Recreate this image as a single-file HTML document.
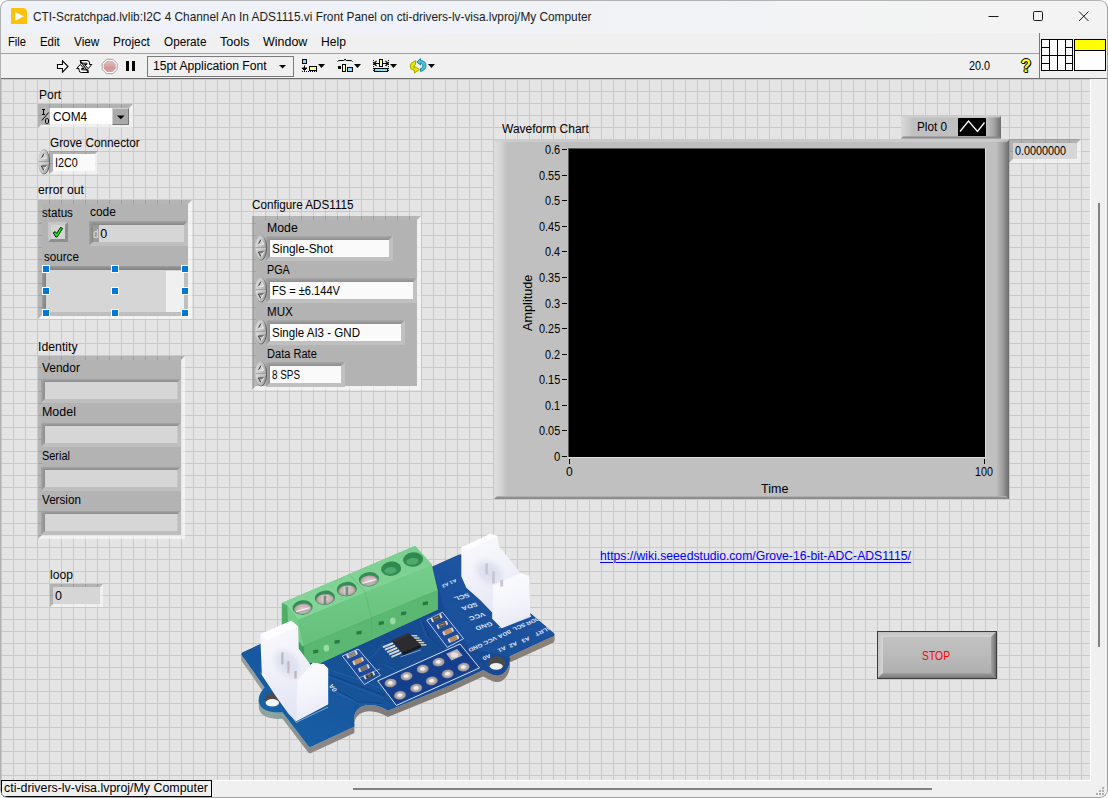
<!DOCTYPE html>
<html lang="en"><head><meta charset="utf-8"><title>CTI-Scratchpad.lvlib:I2C 4 Channel An In ADS1115.vi Front Panel</title>
<style>
html,body{margin:0;padding:0;background:#fff;}
body{width:1108px;height:798px;overflow:hidden;font-family:"Liberation Sans",sans-serif;}
#win{position:absolute;left:0;top:0;width:1108px;height:798px;overflow:hidden;background:#f0f0f0;border-radius:8px 8px 8px 8px;}
.b{position:absolute;box-sizing:border-box;}
.t{position:absolute;white-space:nowrap;color:#000;transform-origin:0 0;}
svg{position:absolute;overflow:visible;}
#panel{position:absolute;left:1px;top:79px;width:1089px;height:701px;background-color:#e4e4e4;
 background-image:linear-gradient(to right,#c9c9c9 1px,transparent 1px),linear-gradient(to bottom,#c9c9c9 1px,transparent 1px);
 background-size:12px 12px;background-position:0px 0px;}

</style></head><body>
<div id="win">
<div class="b" style="left:0;top:0;width:1108px;height:33px;background:linear-gradient(to right,#eef2f9 0%,#eff2f8 40%,#f3f3f3 85%);"></div>
<svg style="left:11px;top:8px" width="16" height="16" viewBox="0 0 16 16"><path d="M0 0H11.5Q16 0 16 4.5V16H0Z" fill="#ffc107"/><path d="M4.1 3.9L13 8.3L4.1 12.8Z" fill="#fff"/></svg>
<span class="t" style="left:33.30px;top:10px;font-size:12.2px;line-height:14px;transform:scaleX(0.9719);color:#1a1a1a;">CTI-Scratchpad.lvlib:I2C 4 Channel An In ADS1115.vi Front Panel on cti-drivers-lv-visa.lvproj/My Computer</span>
<svg style="left:980px;top:0" width="128" height="33" viewBox="0 0 128 33"><g fill="none" stroke="#1a1a1a" stroke-width="1"><path d="M8.5 16.5H18.5"/><rect x="53.5" y="11.5" width="9" height="9" rx="1.2"/><path d="M99 11.5L108.5 21M108.5 11.5L99 21"/></g></svg>
<div class="b" style="left:0;top:33px;width:1108px;height:20px;background:#f0f0f0;"></div>
<span class="t" style="left:8.40px;top:35px;font-size:12px;line-height:14px;transform:scaleX(0.9359);">File</span>
<span class="t" style="left:40.10px;top:35px;font-size:12px;line-height:14px;transform:scaleX(0.9524);">Edit</span>
<span class="t" style="left:73.60px;top:35px;font-size:12px;line-height:14px;transform:scaleX(0.9834);">View</span>
<span class="t" style="left:113.10px;top:35px;font-size:12px;line-height:14px;transform:scaleX(0.9878);">Project</span>
<span class="t" style="left:163.60px;top:35px;font-size:12px;line-height:14px;transform:scaleX(0.9780);">Operate</span>
<span class="t" style="left:219.60px;top:35px;font-size:12px;line-height:14px;transform:scaleX(1.0496);">Tools</span>
<span class="t" style="left:262.60px;top:35px;font-size:12px;line-height:14px;transform:scaleX(1.0394);">Window</span>
<span class="t" style="left:321.10px;top:35px;font-size:12px;line-height:14px;transform:scaleX(1.0084);">Help</span>
<div class="b" style="left:0;top:53px;width:1040px;height:1px;background:#a0a0a0;"></div>
<div class="b" style="left:0;top:54px;width:1108px;height:24px;background:#f0f0f0;"></div>
<div class="b" style="left:0;top:78px;width:1108px;height:1px;background:#6e6e6e;"></div>
<div class="b" style="left:1039px;top:33px;width:1px;height:45px;background:#7a7a7a;"></div>
<div id="panel"></div>
<div class="b" style="left:1090px;top:79px;width:1px;height:702px;background:#fff;"></div>
<div class="b" style="left:1px;top:780px;width:1090px;height:1px;background:#fff;"></div>
<div class="b" style="left:1091px;top:79px;width:17px;height:719px;background:#f0f0f0;"></div>
<div class="b" style="left:1px;top:781px;width:1107px;height:17px;background:#f0f0f0;"></div>
<div class="b" style="left:1098px;top:203px;width:2px;height:444px;background:#828282;"></div>
<div class="b" style="left:353px;top:788px;width:579px;height:2px;background:#828282;"></div>
<div class="b" style="left:1px;top:780px;width:211px;height:17px;background:#f0f0f0;border:1px solid #000;"></div>
<span class="t" style="left:4.10px;top:781px;font-size:12.5px;line-height:14px;transform:scaleX(0.9918);">cti-drivers-lv-visa.lvproj/My Computer</span>
<svg style="left:1094px;top:785px" width="12" height="12" viewBox="0 0 12 12"><g fill="#b0b0b0"><rect x="8" y="2" width="2" height="2"/><rect x="5" y="5" width="2" height="2"/><rect x="8" y="5" width="2" height="2"/><rect x="2" y="8" width="2" height="2"/><rect x="5" y="8" width="2" height="2"/><rect x="8" y="8" width="2" height="2"/></g></svg>
<svg style="left:0;top:0" width="1108" height="80" viewBox="0 0 1108 80"><path d="M57.5 64.5H62.5V60.8L68 66.5L62.5 72.2V68.5H57.5Z" fill="#fff" stroke="#000" stroke-width="1.1" stroke-linejoin="miter"/><g fill="#fff" stroke="#000" stroke-width="1" stroke-linejoin="miter"><path d="M80.5 60.5H87Q89.5 60.5 89.5 63V64.5H91.8L88.2 68.6L84.6 64.5H86.9V63.2H80.5Z"/><path d="M88 72.5H81.5Q79 72.5 79 70V68.5H76.7L80.3 64.4L83.9 68.5H81.6V69.8H88Z"/></g><path d="M80 60.2L88.6 72.8" stroke="#000" stroke-width="1.1" fill="none"/><defs><linearGradient id="ab" x1="0" y1="0" x2="0" y2="1"><stop offset="0" stop-color="#e3b5b5"/><stop offset="0.5" stop-color="#d9a4a4"/><stop offset="0.55" stop-color="#cf9797"/><stop offset="1" stop-color="#d7a3a3"/></linearGradient></defs><path d="M106.5 59.3H112.9L117.2 63.6V69.4L112.9 73.7H106.5L102.2 69.4V63.6Z" fill="#fafafa" stroke="#9a9a9a" stroke-width="0.9"/><path d="M107 60.9H112.4L115.7 64.2V68.8L112.4 72.1H107L103.7 68.8V64.2Z" fill="url(#ab)"/><rect x="126" y="61" width="3" height="10" fill="#000"/><rect x="132" y="61" width="3" height="10" fill="#000"/><rect x="147.5" y="56.5" width="146" height="20" fill="#f0f0f0" stroke="#7a7a7a" stroke-width="1"/><path d="M279 65H286L282.5 68.5Z" fill="#000"/><rect x="302.5" y="59.5" width="4" height="4" fill="#80e0ff" stroke="#000"/><path d="M304.5 65.5V70M302 68H307L304.5 70.5Z" fill="#000" stroke="#000" stroke-width="1"/><path d="M302 71.5H317" stroke="#000" stroke-width="1" stroke-dasharray="1 1" fill="none"/><rect x="309.5" y="66.5" width="7" height="4" fill="#ffff80" stroke="#000"/><path d="M318 64H325L321.5 68Z" fill="#000"/><path d="M337.5 61.5Q338 60.5 340 60.5H343.5Q344.5 60.5 345 59Q345.5 60.5 346.5 60.5H350Q352 60.5 352.5 61.5" stroke="#000" stroke-width="1" fill="none"/><rect x="338" y="66" width="3" height="3" fill="#000"/><rect x="342.5" y="64.5" width="3" height="7" fill="#ffff80" stroke="#000"/><rect x="347.5" y="67.5" width="5" height="4" fill="#80e0ff" stroke="#000"/><path d="M354 64H361L357.5 68Z" fill="#000"/><path d="M373.5 60V72M388.5 60V72" stroke="#000" stroke-width="1" stroke-dasharray="1 1" fill="none"/><path d="M374 63.5H388M376.5 61L374 63.5L376.5 66M385.5 61L388 63.5L385.5 66" stroke="#000" stroke-width="1.2" fill="none"/><rect x="379.5" y="59.5" width="3" height="7" fill="#ffff80" stroke="#000"/><rect x="374.5" y="68.5" width="13" height="3" fill="#80e0ff" stroke="#000"/><path d="M390 64H397L393.5 68Z" fill="#000"/><path d="M415.5 60.5L411 63.5Q409.5 66 411 69L414.5 70.5V73L419.5 69.5L414.5 66.5V68.2L413 66.5L415.5 64.5Z" fill="#e8e800" stroke="#a8a800" stroke-width="1" stroke-linejoin="round"/><path d="M420.5 58.5L416.8 62L420.5 65V63.2Q423 63.5 423 66T420.5 68.5V71.5Q426 70 426 65.5T420.5 60.5Z" fill="#55c0dd" stroke="#1f8aa8" stroke-width="1" stroke-linejoin="round"/><path d="M428 64H435L431.5 68Z" fill="#000"/><rect x="1041.5" y="39.5" width="31" height="31" fill="#fff" stroke="#000"/><path d="M1049.5 39.5V70.5M1057.5 39.5V70.5M1065.5 39.5V70.5M1041.5 47.5H1049.5M1041.5 55.5H1072.5M1041.5 63.5H1049.5M1065.5 47.5H1072.5M1065.5 63.5H1072.5" stroke="#000" fill="none"/><rect x="1074.5" y="39.5" width="31" height="31" fill="#fff" stroke="#000"/><rect x="1075" y="40" width="30" height="10" fill="#ffff00"/><path d="M1074.5 50.5H1105.5" stroke="#000"/></svg>
<span class="t" style="left:153.30px;top:59px;font-size:12.5px;line-height:14px;transform:scaleX(0.9739);">15pt Application Font</span>
<span class="t" style="left:968.90px;top:59px;font-size:12.5px;line-height:14px;transform:scaleX(0.8669);">20.0</span>
<span class="t" style="left:1021px;top:56px;font-size:17.5px;line-height:20px;transform:scaleX(0.94);font-weight:bold;color:#ffff00;text-shadow:1px 0 0 #000,-1px 0 0 #000,0 1px 0 #000,0 -1px 0 #000,1px 1px 0 #000;">?</span>
<span class="t" style="left:38.90px;top:88px;font-size:12.5px;line-height:14px;transform:scaleX(0.9635);">Port</span>
<div class="b" style="left:38px;top:104px;width:95px;height:24px;border-style:solid;border-width:4px;border-color:rgba(0,0,0,.22) rgba(255,255,255,.45) rgba(255,255,255,.45) rgba(0,0,0,.22);background:#fff;background-clip:padding-box;"></div>
<div class="b" style="left:42px;top:108px;width:8px;height:17px;background:#b6b6b6;"></div>
<svg style="left:41px;top:108px" width="9" height="17" viewBox="0 0 9 17"><path d="M1 1.5H4M2.5 1.5V6.5M1 6.5H4" stroke="#000" stroke-width="1" fill="none"/><path d="M7.6 4.5L0.8 12.5" stroke="#000" stroke-width="1" fill="none"/><rect x="4.5" y="10.5" width="3" height="5" rx="1.3" fill="none" stroke="#000" stroke-width="1"/></svg>
<span class="t" style="left:52.90px;top:110px;font-size:12.5px;line-height:14px;transform:scaleX(0.9440);">COM4</span>
<div class="b" style="left:112px;top:108px;width:17px;height:17px;border-style:solid;border-width:1.5px;border-color:#d0d0d0 #747474 #747474 #d0d0d0;background:#a9a9a9;"></div>
<svg style="left:112px;top:108px" width="17" height="17" viewBox="0 0 17 17"><path d="M5 7.5H12.6L8.8 11.3Z" fill="#000"/></svg>
<span class="t" style="left:50.20px;top:136px;font-size:12.5px;line-height:14px;transform:scaleX(0.9434);">Grove Connector</span>
<div class="b" style="left:49px;top:151px;width:49px;height:23px;border-style:solid;border-width:3px 3px 3px 4px;border-color:rgba(0,0,0,.22) rgba(255,255,255,.45) rgba(255,255,255,.45) rgba(0,0,0,.22);background:#fafafa;background-clip:padding-box;"></div>
<svg style="left:38px;top:149.2px" width="12" height="25.6" viewBox="0 0 12 25.6"><defs><linearGradient id="sp1" x1="0" y1="0" x2="1" y2="0.3"><stop offset="0" stop-color="#e0e0e0"/><stop offset="0.5" stop-color="#cacaca"/><stop offset="1" stop-color="#a8a8a8"/></linearGradient><linearGradient id="ss1" x1="0" y1="0" x2="1" y2="0.4"><stop offset="0" stop-color="#d8d8d8"/><stop offset="0.55" stop-color="#a0a0a0"/><stop offset="1" stop-color="#4c4c4c"/></linearGradient></defs><ellipse cx="6.0" cy="12.8" rx="5.5" ry="12.3" fill="url(#sp1)" stroke="url(#ss1)" stroke-width="0.9"/><path d="M0.8 12.8H11.2" stroke="#909090" stroke-width="1"/><path d="M1 13.8H11" stroke="#dedede" stroke-width="0.8"/><path d="M3.4 9.200000000000001L6.0 4.4" stroke="#303030" stroke-width="1" fill="none"/><path d="M6.0 4.4L8.6 9.200000000000001H3.4" stroke="#f0f0f0" stroke-width="1" fill="none"/><path d="M8.6 17.0H3.4L6.0 21.8" stroke="#303030" stroke-width="1" fill="none"/><path d="M6.0 21.8L8.6 17.0" stroke="#f0f0f0" stroke-width="1" fill="none"/></svg>
<span class="t" style="left:55.40px;top:156px;font-size:12.5px;line-height:14px;transform:scaleX(0.8636);">I2C0</span>
<span class="t" style="left:38.10px;top:183px;font-size:12.5px;line-height:14px;transform:scaleX(0.9715);">error out</span>
<div class="b" style="left:38px;top:200px;width:154px;height:119px;border-style:solid;border-width:4px;border-color:rgba(0,0,0,.2) rgba(255,255,255,.55) rgba(255,255,255,.55) rgba(0,0,0,.2);background:#b3b3b3;background-clip:padding-box;"></div>
<span class="t" style="left:42.10px;top:206px;font-size:12.5px;line-height:14px;transform:scaleX(0.9263);">status</span>
<span class="t" style="left:90.10px;top:205px;font-size:12.5px;line-height:14px;transform:scaleX(0.9556);">code</span>
<div class="b" style="left:48px;top:222px;width:20px;height:20px;border-style:solid;border-width:3px;border-color:#c6c6c6 #8e8e8e #8e8e8e #c6c6c6;background:#d4d4d4;"></div>
<svg style="left:48px;top:222px" width="20" height="20" viewBox="0 0 20 20"><path d="M5.3 10.8L7.2 9.6L8.6 11.4L12.6 5.4L14.6 6.4L9.2 15L7.8 15Z" fill="#00ff00" stroke="#000" stroke-width="0.9" stroke-linejoin="round"/></svg>
<svg style="left:89px;top:221px" width="99" height="25" viewBox="0 0 99 25"><defs><linearGradient id="g89_221t" x1="0" y1="0" x2="0" y2="1"><stop offset="0" stop-color="#a3a3a3"/><stop offset="1" stop-color="#858585"/></linearGradient><linearGradient id="g89_221l" x1="0" y1="0" x2="1" y2="0"><stop offset="0" stop-color="#a3a3a3"/><stop offset="1" stop-color="#858585"/></linearGradient></defs><path d="M0 0H99L95 4H4Z" fill="url(#g89_221t)"/><path d="M0 0L4 4V21L0 25Z" fill="url(#g89_221l)"/><path d="M99 0V25H0L4 21H95V4Z" fill="#bfbfbf"/><rect x="4" y="4" width="91" height="17" fill="#d6d6d6"/></svg>
<div class="b" style="left:93px;top:225px;width:6px;height:17px;background:#9b9b9b;"></div>
<span class="t" style="left:92.70px;top:227px;font-size:12.5px;line-height:14px;transform:scaleX(0.8200);color:#dcdcdc;">d</span>
<span class="t" style="left:100.30px;top:227px;font-size:12.5px;line-height:14px;">0</span>
<span class="t" style="left:44.10px;top:250px;font-size:12.5px;line-height:14px;transform:scaleX(0.9300);">source</span>
<svg style="left:42px;top:266px" width="146" height="50" viewBox="0 0 146 50"><defs><linearGradient id="g42_266t" x1="0" y1="0" x2="0" y2="1"><stop offset="0" stop-color="#9c9c9c"/><stop offset="1" stop-color="#808080"/></linearGradient><linearGradient id="g42_266l" x1="0" y1="0" x2="1" y2="0"><stop offset="0" stop-color="#9c9c9c"/><stop offset="1" stop-color="#808080"/></linearGradient></defs><path d="M0 0H146L142 4H4Z" fill="url(#g42_266t)"/><path d="M0 0L4 4V46L0 50Z" fill="url(#g42_266l)"/><path d="M146 0V50H0L4 46H142V4Z" fill="#bfbfbf"/><rect x="4" y="4" width="138" height="42" fill="#d6d6d6"/></svg>
<div class="b" style="left:166px;top:271px;width:17.5px;height:40.5px;background:#f0f0f0;"></div>
<div class="b" style="left:42px;top:265px;width:8px;height:8px;background:#0078d7;border:1px solid #fff;"></div>
<div class="b" style="left:42px;top:287px;width:8px;height:8px;background:#0078d7;border:1px solid #fff;"></div>
<div class="b" style="left:42px;top:309px;width:8px;height:8px;background:#0078d7;border:1px solid #fff;"></div>
<div class="b" style="left:111px;top:265px;width:8px;height:8px;background:#0078d7;border:1px solid #fff;"></div>
<div class="b" style="left:111px;top:287px;width:8px;height:8px;background:#0078d7;border:1px solid #fff;"></div>
<div class="b" style="left:111px;top:309px;width:8px;height:8px;background:#0078d7;border:1px solid #fff;"></div>
<div class="b" style="left:181px;top:265px;width:8px;height:8px;background:#0078d7;border:1px solid #fff;"></div>
<div class="b" style="left:181px;top:287px;width:8px;height:8px;background:#0078d7;border:1px solid #fff;"></div>
<div class="b" style="left:181px;top:309px;width:8px;height:8px;background:#0078d7;border:1px solid #fff;"></div>
<span class="t" style="left:38.40px;top:340px;font-size:12.5px;line-height:14px;transform:scaleX(0.9824);">Identity</span>
<div class="b" style="left:38px;top:355.5px;width:147px;height:183.5px;border-style:solid;border-width:4px;border-color:rgba(0,0,0,.2) rgba(255,255,255,.55) rgba(255,255,255,.55) rgba(0,0,0,.2);background:#b3b3b3;background-clip:padding-box;"></div>
<span class="t" style="left:42.10px;top:361px;font-size:12.5px;line-height:14px;transform:scaleX(0.9566);">Vendor</span>
<svg style="left:41px;top:379px" width="140" height="24" viewBox="0 0 140 24"><defs><linearGradient id="g41_379t" x1="0" y1="0" x2="0" y2="1"><stop offset="0" stop-color="#a6a6a6"/><stop offset="1" stop-color="#8c8c8c"/></linearGradient><linearGradient id="g41_379l" x1="0" y1="0" x2="1" y2="0"><stop offset="0" stop-color="#a6a6a6"/><stop offset="1" stop-color="#8c8c8c"/></linearGradient></defs><path d="M0 0H140L136.5 3H4Z" fill="url(#g41_379t)"/><path d="M0 0L4 3V20L0 24Z" fill="url(#g41_379l)"/><path d="M140 0V24H0L4 20H136.5V3Z" fill="#bebebe"/><rect x="4" y="3" width="132.5" height="17" fill="#d6d6d6"/></svg>
<span class="t" style="left:42.10px;top:405px;font-size:12.5px;line-height:14px;transform:scaleX(0.9956);">Model</span>
<svg style="left:41px;top:423px" width="140" height="24" viewBox="0 0 140 24"><defs><linearGradient id="g41_423t" x1="0" y1="0" x2="0" y2="1"><stop offset="0" stop-color="#a6a6a6"/><stop offset="1" stop-color="#8c8c8c"/></linearGradient><linearGradient id="g41_423l" x1="0" y1="0" x2="1" y2="0"><stop offset="0" stop-color="#a6a6a6"/><stop offset="1" stop-color="#8c8c8c"/></linearGradient></defs><path d="M0 0H140L136.5 3H4Z" fill="url(#g41_423t)"/><path d="M0 0L4 3V20L0 24Z" fill="url(#g41_423l)"/><path d="M140 0V24H0L4 20H136.5V3Z" fill="#bebebe"/><rect x="4" y="3" width="132.5" height="17" fill="#d6d6d6"/></svg>
<span class="t" style="left:42.10px;top:449px;font-size:12.5px;line-height:14px;transform:scaleX(0.8726);">Serial</span>
<svg style="left:41px;top:467px" width="140" height="24" viewBox="0 0 140 24"><defs><linearGradient id="g41_467t" x1="0" y1="0" x2="0" y2="1"><stop offset="0" stop-color="#a6a6a6"/><stop offset="1" stop-color="#8c8c8c"/></linearGradient><linearGradient id="g41_467l" x1="0" y1="0" x2="1" y2="0"><stop offset="0" stop-color="#a6a6a6"/><stop offset="1" stop-color="#8c8c8c"/></linearGradient></defs><path d="M0 0H140L136.5 3H4Z" fill="url(#g41_467t)"/><path d="M0 0L4 3V20L0 24Z" fill="url(#g41_467l)"/><path d="M140 0V24H0L4 20H136.5V3Z" fill="#bebebe"/><rect x="4" y="3" width="132.5" height="17" fill="#d6d6d6"/></svg>
<span class="t" style="left:42.10px;top:493px;font-size:12.5px;line-height:14px;transform:scaleX(0.9329);">Version</span>
<svg style="left:41px;top:511px" width="140" height="24" viewBox="0 0 140 24"><defs><linearGradient id="g41_511t" x1="0" y1="0" x2="0" y2="1"><stop offset="0" stop-color="#a6a6a6"/><stop offset="1" stop-color="#8c8c8c"/></linearGradient><linearGradient id="g41_511l" x1="0" y1="0" x2="1" y2="0"><stop offset="0" stop-color="#a6a6a6"/><stop offset="1" stop-color="#8c8c8c"/></linearGradient></defs><path d="M0 0H140L136.5 3H4Z" fill="url(#g41_511t)"/><path d="M0 0L4 3V20L0 24Z" fill="url(#g41_511l)"/><path d="M140 0V24H0L4 20H136.5V3Z" fill="#bebebe"/><rect x="4" y="3" width="132.5" height="17" fill="#d6d6d6"/></svg>
<span class="t" style="left:50.10px;top:568px;font-size:12.5px;line-height:14px;transform:scaleX(0.9685);">loop</span>
<div class="b" style="left:50px;top:584px;width:53px;height:23px;border-style:solid;border-width:3px 3.5px 3.5px 3px;border-color:rgba(0,0,0,.22) rgba(255,255,255,.45) rgba(255,255,255,.45) rgba(0,0,0,.22);background:#d6d6d6;background-clip:padding-box;"></div>
<span class="t" style="left:55.10px;top:589px;font-size:12.5px;line-height:14px;">0</span>
<span class="t" style="left:252.40px;top:198px;font-size:12.5px;line-height:14px;transform:scaleX(0.9352);">Configure ADS1115</span>
<div class="b" style="left:252px;top:216px;width:169px;height:174px;border-style:solid;border-width:4px;border-color:rgba(0,0,0,.2) rgba(255,255,255,.55) rgba(255,255,255,.55) rgba(0,0,0,.2);background:#b3b3b3;background-clip:padding-box;"></div>
<span class="t" style="left:267.20px;top:221px;font-size:12.5px;line-height:14px;transform:scaleX(0.9848);">Mode</span>
<svg style="left:266px;top:236px" width="127" height="25" viewBox="0 0 127 25"><defs><linearGradient id="g266_236t" x1="0" y1="0" x2="0" y2="1"><stop offset="0" stop-color="#a8a8a8"/><stop offset="1" stop-color="#8e8e8e"/></linearGradient><linearGradient id="g266_236l" x1="0" y1="0" x2="1" y2="0"><stop offset="0" stop-color="#a8a8a8"/><stop offset="1" stop-color="#8e8e8e"/></linearGradient></defs><path d="M0 0H127L123 4H4Z" fill="url(#g266_236t)"/><path d="M0 0L4 4V21L0 25Z" fill="url(#g266_236l)"/><path d="M127 0V25H0L4 21H123V4Z" fill="#c0c0c0"/><rect x="4" y="4" width="119" height="17" fill="#fafafa"/></svg>
<svg style="left:254.8px;top:235.3px" width="12" height="25.6" viewBox="0 0 12 25.6"><defs><linearGradient id="sp2" x1="0" y1="0" x2="1" y2="0.3"><stop offset="0" stop-color="#e0e0e0"/><stop offset="0.5" stop-color="#cacaca"/><stop offset="1" stop-color="#a8a8a8"/></linearGradient><linearGradient id="ss2" x1="0" y1="0" x2="1" y2="0.4"><stop offset="0" stop-color="#d8d8d8"/><stop offset="0.55" stop-color="#a0a0a0"/><stop offset="1" stop-color="#4c4c4c"/></linearGradient></defs><ellipse cx="6.0" cy="12.8" rx="5.5" ry="12.3" fill="url(#sp2)" stroke="url(#ss2)" stroke-width="0.9"/><path d="M0.8 12.8H11.2" stroke="#909090" stroke-width="1"/><path d="M1 13.8H11" stroke="#dedede" stroke-width="0.8"/><path d="M3.4 9.200000000000001L6.0 4.4" stroke="#303030" stroke-width="1" fill="none"/><path d="M6.0 4.4L8.6 9.200000000000001H3.4" stroke="#f0f0f0" stroke-width="1" fill="none"/><path d="M8.6 17.0H3.4L6.0 21.8" stroke="#303030" stroke-width="1" fill="none"/><path d="M6.0 21.8L8.6 17.0" stroke="#f0f0f0" stroke-width="1" fill="none"/></svg>
<span class="t" style="left:272.00px;top:242px;font-size:12.5px;line-height:14px;transform:scaleX(0.9439);">Single-Shot</span>
<span class="t" style="left:267.20px;top:263px;font-size:12.5px;line-height:14px;transform:scaleX(0.8634);">PGA</span>
<svg style="left:266px;top:278px" width="151" height="25" viewBox="0 0 151 25"><defs><linearGradient id="g266_278t" x1="0" y1="0" x2="0" y2="1"><stop offset="0" stop-color="#a8a8a8"/><stop offset="1" stop-color="#8e8e8e"/></linearGradient><linearGradient id="g266_278l" x1="0" y1="0" x2="1" y2="0"><stop offset="0" stop-color="#a8a8a8"/><stop offset="1" stop-color="#8e8e8e"/></linearGradient></defs><path d="M0 0H151L147 4H4Z" fill="url(#g266_278t)"/><path d="M0 0L4 4V21L0 25Z" fill="url(#g266_278l)"/><path d="M151 0V25H0L4 21H147V4Z" fill="#c0c0c0"/><rect x="4" y="4" width="143" height="17" fill="#fafafa"/></svg>
<svg style="left:254.8px;top:277.3px" width="12" height="25.6" viewBox="0 0 12 25.6"><defs><linearGradient id="sp3" x1="0" y1="0" x2="1" y2="0.3"><stop offset="0" stop-color="#e0e0e0"/><stop offset="0.5" stop-color="#cacaca"/><stop offset="1" stop-color="#a8a8a8"/></linearGradient><linearGradient id="ss3" x1="0" y1="0" x2="1" y2="0.4"><stop offset="0" stop-color="#d8d8d8"/><stop offset="0.55" stop-color="#a0a0a0"/><stop offset="1" stop-color="#4c4c4c"/></linearGradient></defs><ellipse cx="6.0" cy="12.8" rx="5.5" ry="12.3" fill="url(#sp3)" stroke="url(#ss3)" stroke-width="0.9"/><path d="M0.8 12.8H11.2" stroke="#909090" stroke-width="1"/><path d="M1 13.8H11" stroke="#dedede" stroke-width="0.8"/><path d="M3.4 9.200000000000001L6.0 4.4" stroke="#303030" stroke-width="1" fill="none"/><path d="M6.0 4.4L8.6 9.200000000000001H3.4" stroke="#f0f0f0" stroke-width="1" fill="none"/><path d="M8.6 17.0H3.4L6.0 21.8" stroke="#303030" stroke-width="1" fill="none"/><path d="M6.0 21.8L8.6 17.0" stroke="#f0f0f0" stroke-width="1" fill="none"/></svg>
<span class="t" style="left:272.00px;top:284px;font-size:12.5px;line-height:14px;transform:scaleX(0.8865);">FS = ±6.144V</span>
<span class="t" style="left:267.20px;top:305px;font-size:12.5px;line-height:14px;transform:scaleX(0.9288);">MUX</span>
<svg style="left:266px;top:320px" width="139" height="25" viewBox="0 0 139 25"><defs><linearGradient id="g266_320t" x1="0" y1="0" x2="0" y2="1"><stop offset="0" stop-color="#a8a8a8"/><stop offset="1" stop-color="#8e8e8e"/></linearGradient><linearGradient id="g266_320l" x1="0" y1="0" x2="1" y2="0"><stop offset="0" stop-color="#a8a8a8"/><stop offset="1" stop-color="#8e8e8e"/></linearGradient></defs><path d="M0 0H139L135 4H4Z" fill="url(#g266_320t)"/><path d="M0 0L4 4V21L0 25Z" fill="url(#g266_320l)"/><path d="M139 0V25H0L4 21H135V4Z" fill="#c0c0c0"/><rect x="4" y="4" width="131" height="17" fill="#fafafa"/></svg>
<svg style="left:254.8px;top:319.3px" width="12" height="25.6" viewBox="0 0 12 25.6"><defs><linearGradient id="sp4" x1="0" y1="0" x2="1" y2="0.3"><stop offset="0" stop-color="#e0e0e0"/><stop offset="0.5" stop-color="#cacaca"/><stop offset="1" stop-color="#a8a8a8"/></linearGradient><linearGradient id="ss4" x1="0" y1="0" x2="1" y2="0.4"><stop offset="0" stop-color="#d8d8d8"/><stop offset="0.55" stop-color="#a0a0a0"/><stop offset="1" stop-color="#4c4c4c"/></linearGradient></defs><ellipse cx="6.0" cy="12.8" rx="5.5" ry="12.3" fill="url(#sp4)" stroke="url(#ss4)" stroke-width="0.9"/><path d="M0.8 12.8H11.2" stroke="#909090" stroke-width="1"/><path d="M1 13.8H11" stroke="#dedede" stroke-width="0.8"/><path d="M3.4 9.200000000000001L6.0 4.4" stroke="#303030" stroke-width="1" fill="none"/><path d="M6.0 4.4L8.6 9.200000000000001H3.4" stroke="#f0f0f0" stroke-width="1" fill="none"/><path d="M8.6 17.0H3.4L6.0 21.8" stroke="#303030" stroke-width="1" fill="none"/><path d="M6.0 21.8L8.6 17.0" stroke="#f0f0f0" stroke-width="1" fill="none"/></svg>
<span class="t" style="left:272.00px;top:326px;font-size:12.5px;line-height:14px;transform:scaleX(0.9245);">Single AI3 - GND</span>
<span class="t" style="left:267.20px;top:347px;font-size:12.5px;line-height:14px;transform:scaleX(0.8849);">Data Rate</span>
<svg style="left:266px;top:362px" width="79" height="25" viewBox="0 0 79 25"><defs><linearGradient id="g266_362t" x1="0" y1="0" x2="0" y2="1"><stop offset="0" stop-color="#a8a8a8"/><stop offset="1" stop-color="#8e8e8e"/></linearGradient><linearGradient id="g266_362l" x1="0" y1="0" x2="1" y2="0"><stop offset="0" stop-color="#a8a8a8"/><stop offset="1" stop-color="#8e8e8e"/></linearGradient></defs><path d="M0 0H79L75 4H4Z" fill="url(#g266_362t)"/><path d="M0 0L4 4V21L0 25Z" fill="url(#g266_362l)"/><path d="M79 0V25H0L4 21H75V4Z" fill="#c0c0c0"/><rect x="4" y="4" width="71" height="17" fill="#fafafa"/></svg>
<svg style="left:254.8px;top:361.3px" width="12" height="25.6" viewBox="0 0 12 25.6"><defs><linearGradient id="sp5" x1="0" y1="0" x2="1" y2="0.3"><stop offset="0" stop-color="#e0e0e0"/><stop offset="0.5" stop-color="#cacaca"/><stop offset="1" stop-color="#a8a8a8"/></linearGradient><linearGradient id="ss5" x1="0" y1="0" x2="1" y2="0.4"><stop offset="0" stop-color="#d8d8d8"/><stop offset="0.55" stop-color="#a0a0a0"/><stop offset="1" stop-color="#4c4c4c"/></linearGradient></defs><ellipse cx="6.0" cy="12.8" rx="5.5" ry="12.3" fill="url(#sp5)" stroke="url(#ss5)" stroke-width="0.9"/><path d="M0.8 12.8H11.2" stroke="#909090" stroke-width="1"/><path d="M1 13.8H11" stroke="#dedede" stroke-width="0.8"/><path d="M3.4 9.200000000000001L6.0 4.4" stroke="#303030" stroke-width="1" fill="none"/><path d="M6.0 4.4L8.6 9.200000000000001H3.4" stroke="#f0f0f0" stroke-width="1" fill="none"/><path d="M8.6 17.0H3.4L6.0 21.8" stroke="#303030" stroke-width="1" fill="none"/><path d="M6.0 21.8L8.6 17.0" stroke="#f0f0f0" stroke-width="1" fill="none"/></svg>
<span class="t" style="left:272.00px;top:368px;font-size:12.5px;line-height:14px;transform:scaleX(0.7901);">8 SPS</span>
<span class="t" style="left:600.10px;top:549px;font-size:12.5px;line-height:14px;transform:scaleX(0.9742);color:#0000ff;text-decoration:underline;text-underline-offset:1.5px;text-decoration-thickness:1px;">https://wiki.seeedstudio.com/Grove-16-bit-ADC-ADS1115/</span>
<svg style="left:877px;top:631px" width="120" height="48" viewBox="0 0 120 48"><defs><linearGradient id="sb" x1="0" y1="0" x2="0" y2="1"><stop offset="0" stop-color="#c4c4c4"/><stop offset="0.5" stop-color="#bababa"/><stop offset="1" stop-color="#acacac"/></linearGradient><linearGradient id="sbl" x1="0" y1="0" x2="1" y2="0"><stop offset="0" stop-color="#c2c2c2"/><stop offset="1" stop-color="#d6d6d6"/></linearGradient><linearGradient id="sbr" x1="0" y1="0" x2="1" y2="0"><stop offset="0" stop-color="#a4a4a4"/><stop offset="1" stop-color="#6e6e6e"/></linearGradient><linearGradient id="sbt" x1="0" y1="0" x2="0" y2="1"><stop offset="0" stop-color="#c0c0c0"/><stop offset="1" stop-color="#d2d2d2"/></linearGradient><linearGradient id="sbb" x1="0" y1="0" x2="0" y2="1"><stop offset="0" stop-color="#a0a0a0"/><stop offset="1" stop-color="#787878"/></linearGradient></defs><rect x="0.5" y="0.5" width="119" height="47" fill="url(#sb)" stroke="#3c3c3c"/><path d="M1 1H119L114 6H6Z" fill="url(#sbt)"/><path d="M1 1L6 6V42L1 47Z" fill="url(#sbl)"/><path d="M119 1V47L114 42V6Z" fill="url(#sbr)"/><path d="M1 47L6 42H114L119 47Z" fill="url(#sbb)"/></svg>
<span class="t" style="left:921.90px;top:649px;font-size:12.5px;line-height:14px;transform:scaleX(0.8309);color:#ff0000;">STOP</span>
<span class="t" style="left:502.10px;top:122px;font-size:12.5px;line-height:14px;transform:scaleX(0.9599);">Waveform Chart</span>
<svg style="left:901px;top:116px" width="100" height="23" viewBox="0 0 100 23"><defs><linearGradient id="lgl" x1="0" y1="0" x2="1" y2="0"><stop offset="0" stop-color="#dadada"/><stop offset="0.12" stop-color="#c0c0c0"/><stop offset="0.86" stop-color="#c0c0c0"/><stop offset="0.93" stop-color="#a4a4a4"/><stop offset="1" stop-color="#6c6c6c"/></linearGradient></defs><rect x="0" y="0" width="100" height="22.5" fill="url(#lgl)"/><path d="M0 0H100L99 1.5H1Z" fill="#d2d2d2" opacity=".8"/><path d="M0 22.5L2 20.5H98L100 22.5Z" fill="#8a8a8a"/><rect x="57" y="2" width="28" height="18" fill="#000"/><path d="M59 15.5L67.5 5L76.5 15.5L83.5 6.5" stroke="#fff" stroke-width="1.3" fill="none"/></svg>
<span class="t" style="left:917.20px;top:120px;font-size:12.5px;line-height:14px;transform:scaleX(0.9416);">Plot 0</span>
<svg style="left:494px;top:140px" width="515" height="359" viewBox="0 0 515 359"><defs><linearGradient id="chl" x1="0" y1="0" x2="1" y2="0"><stop offset="0" stop-color="#dedede"/><stop offset="0.012" stop-color="#d6d6d6"/><stop offset="0.026" stop-color="#c0c0c0"/><stop offset="0.975" stop-color="#c0c0c0"/><stop offset="0.988" stop-color="#9c9c9c"/><stop offset="1" stop-color="#6a6a6a"/></linearGradient></defs><rect x="0" y="0" width="515" height="359" fill="url(#chl)"/><path d="M0 0H515L513 2H2Z" fill="#d0d0d0" opacity=".7"/><path d="M0 359L2 357H513L515 359Z" fill="#8c8c8c"/><path d="M2 357H513L512 356H3Z" fill="#b0b0b0"/><rect x="74" y="8" width="418" height="310" fill="#dcdcdc"/><rect x="74" y="8" width="417" height="309" fill="#5c5c5c"/><rect x="75" y="9" width="416" height="308" fill="#000"/><rect x="68" y="9" width="5" height="1" fill="#000"/><rect x="68" y="35" width="5" height="1" fill="#000"/><rect x="68" y="60" width="5" height="1" fill="#000"/><rect x="68" y="86" width="5" height="1" fill="#000"/><rect x="68" y="111" width="5" height="1" fill="#000"/><rect x="68" y="137" width="5" height="1" fill="#000"/><rect x="68" y="163" width="5" height="1" fill="#000"/><rect x="68" y="188" width="5" height="1" fill="#000"/><rect x="68" y="214" width="5" height="1" fill="#000"/><rect x="68" y="239" width="5" height="1" fill="#000"/><rect x="68" y="265" width="5" height="1" fill="#000"/><rect x="68" y="290" width="5" height="1" fill="#000"/><rect x="68" y="316" width="5" height="1" fill="#000"/><rect x="75" y="319" width="1" height="5" fill="#000"/><rect x="490" y="319" width="1" height="5" fill="#000"/></svg>
<span class="t" style="left:545.10px;top:143px;font-size:12.5px;line-height:14px;transform:scaleX(0.8741);">0.6</span>
<span class="t" style="left:539.10px;top:169px;font-size:12.5px;line-height:14px;transform:scaleX(0.8710);">0.55</span>
<span class="t" style="left:545.10px;top:194px;font-size:12.5px;line-height:14px;transform:scaleX(0.8741);">0.5</span>
<span class="t" style="left:539.10px;top:220px;font-size:12.5px;line-height:14px;transform:scaleX(0.8710);">0.45</span>
<span class="t" style="left:545.10px;top:245px;font-size:12.5px;line-height:14px;transform:scaleX(0.8741);">0.4</span>
<span class="t" style="left:539.10px;top:271px;font-size:12.5px;line-height:14px;transform:scaleX(0.8710);">0.35</span>
<span class="t" style="left:545.10px;top:297px;font-size:12.5px;line-height:14px;transform:scaleX(0.8741);">0.3</span>
<span class="t" style="left:539.10px;top:322px;font-size:12.5px;line-height:14px;transform:scaleX(0.8710);">0.25</span>
<span class="t" style="left:545.10px;top:348px;font-size:12.5px;line-height:14px;transform:scaleX(0.8741);">0.2</span>
<span class="t" style="left:539.10px;top:373px;font-size:12.5px;line-height:14px;transform:scaleX(0.8710);">0.15</span>
<span class="t" style="left:545.10px;top:399px;font-size:12.5px;line-height:14px;transform:scaleX(0.8741);">0.1</span>
<span class="t" style="left:539.10px;top:424px;font-size:12.5px;line-height:14px;transform:scaleX(0.8710);">0.05</span>
<span class="t" style="left:554.00px;top:450px;font-size:12.5px;line-height:14px;transform:scaleX(0.9063);">0</span>
<span class="t" style="left:565.60px;top:465px;font-size:12.5px;line-height:14px;transform:scaleX(0.9639);">0</span>
<span class="t" style="left:975.30px;top:465px;font-size:12.5px;line-height:14px;transform:scaleX(0.8584);">100</span>
<span class="t" style="left:761.10px;top:482px;font-size:12.5px;line-height:14px;">Time</span>
<span class="t" style="left:520.5px;top:331px;font-size:12.5px;line-height:15px;transform:rotate(-90deg) scaleX(1.015);transform-origin:0 0;">Amplitude</span>
<div class="b" style="left:1009px;top:139px;width:72px;height:24px;border-style:solid;border-width:4px;border-color:rgba(0,0,0,.22) rgba(255,255,255,.45) rgba(255,255,255,.45) rgba(0,0,0,.22);background:#d6d6d6;background-clip:padding-box;"></div>
<span class="t" style="left:1015.00px;top:144px;font-size:12.5px;line-height:14px;transform:scaleX(0.8630);">0.0000000</span>
<svg style="left:0;top:0" width="1108" height="798" viewBox="0 0 1108 798"><defs><linearGradient id="pw" x1="0" y1="0" x2="1" y2="0"><stop offset="0" stop-color="#9a9c98"/><stop offset="0.1" stop-color="#8ea4a0"/><stop offset="0.22" stop-color="#8c8a88"/><stop offset="0.5" stop-color="#7f7a76"/><stop offset="1" stop-color="#8c8278"/></linearGradient><linearGradient id="pb" x1="0" y1="1" x2="1" y2="0"><stop offset="0" stop-color="#1a6eb0"/><stop offset="0.22" stop-color="#175a9f"/><stop offset="0.45" stop-color="#164c91"/><stop offset="0.7" stop-color="#184a93"/><stop offset="1" stop-color="#2359a5"/></linearGradient><linearGradient id="gt" x1="0" y1="1" x2="1" y2="0"><stop offset="0" stop-color="#84d699"/><stop offset="1" stop-color="#7acf8e"/></linearGradient><linearGradient id="gf" x1="0" y1="0" x2="0" y2="1"><stop offset="0" stop-color="#74cd8a"/><stop offset="1" stop-color="#66c07c"/></linearGradient><radialGradient id="pad"><stop offset="0" stop-color="#ecebeb"/><stop offset="0.3" stop-color="#dad6d6"/><stop offset="0.55" stop-color="#b4aeae"/><stop offset="0.82" stop-color="#a09a9c"/><stop offset="1" stop-color="#5c6286"/></radialGradient><radialGradient id="scr"><stop offset="0" stop-color="#ddd0d0"/><stop offset="0.7" stop-color="#c6b2b2"/><stop offset="1" stop-color="#a89a9c"/></radialGradient><linearGradient id="wc2" x1="0" y1="0" x2="0.2" y2="1"><stop offset="0" stop-color="#fcfcff"/><stop offset="0.6" stop-color="#f4f5fb"/><stop offset="1" stop-color="#e8eaf5"/></linearGradient><radialGradient id="cav"><stop offset="0" stop-color="#d9dcec"/><stop offset="0.55" stop-color="#dfe2f0" stop-opacity=".9"/><stop offset="1" stop-color="#e8eaf5" stop-opacity="0"/></radialGradient><linearGradient id="wc1" x1="0" y1="0" x2="0.3" y2="1"><stop offset="0" stop-color="#fbfbfe"/><stop offset="0.5" stop-color="#f0f1f9"/><stop offset="1" stop-color="#e2e5f3"/></linearGradient></defs><path d="M241.2 654.2L242.3 652.4L242.3 658.7L241.2 660.5ZM242.3 652.4L458.8 554.7L458.8 561.0L242.3 658.7ZM458.8 554.7L460.9 554.4L460.9 560.7L458.8 561.0ZM460.9 554.4L553.0 632.4L553.0 638.7L460.9 560.7ZM553.0 632.4L554.6 634.2L554.6 640.5L553.0 638.7ZM554.6 640.5L553.7 642.4L553.7 636.1L554.6 634.2ZM553.7 642.4L509.7 662.6L509.7 656.3L553.7 636.1ZM509.7 656.3L510.0 659.5L510.0 665.8L509.7 662.6ZM510.0 665.8L509.6 669.0L509.6 662.7L510.0 659.5ZM509.6 669.0L508.7 672.2L508.7 665.9L509.6 662.7ZM508.7 672.2L507.3 675.2L507.3 668.9L508.7 665.9ZM507.3 675.2L505.5 677.8L505.5 671.5L507.3 668.9ZM505.5 677.8L503.2 680.0L503.2 673.7L505.5 671.5ZM503.2 680.0L500.6 681.4L500.6 675.1L503.2 673.7ZM500.6 681.4L497.8 682.0L497.8 675.7L500.6 675.1ZM497.8 682.0L495.6 681.9L495.6 675.6L497.8 675.7ZM495.6 681.9L493.7 681.5L493.7 675.2L495.6 675.6ZM493.7 681.5L491.9 680.9L491.9 674.6L493.7 675.2ZM491.9 680.9L490.2 680.1L490.2 673.8L491.9 674.6ZM490.2 680.1L488.5 679.3L488.5 673.0L490.2 673.8ZM488.5 679.3L486.8 678.4L486.8 672.1L488.5 673.0ZM486.8 678.4L485.0 677.4L485.0 671.1L486.8 672.1ZM485.0 677.4L483.0 676.5L483.0 670.2L485.0 671.1ZM483.0 676.5L450.0 691.7L450.0 685.4L483.0 670.2ZM450.0 691.7L387.9 717.1L387.9 710.8L450.0 685.4ZM387.9 717.1L385.6 715.7L385.6 709.4L387.9 710.8ZM385.6 715.7L383.2 714.4L383.2 708.1L385.6 709.4ZM383.2 714.4L380.6 713.4L380.6 707.1L383.2 708.1ZM380.6 713.4L378.0 712.5L378.0 706.2L380.6 707.1ZM378.0 712.5L375.2 711.9L375.2 705.6L378.0 706.2ZM375.2 711.9L372.5 711.5L372.5 705.2L375.2 705.6ZM372.5 711.5L369.6 711.3L369.6 705.0L372.5 705.2ZM369.6 711.3L366.8 711.4L366.8 705.1L369.6 705.0ZM366.8 711.4L364.2 712.0L364.2 705.7L366.8 705.1ZM364.2 712.0L361.8 712.9L361.8 706.6L364.2 705.7ZM361.8 712.9L359.6 714.1L359.6 707.8L361.8 706.6ZM359.6 714.1L357.7 715.7L357.7 709.4L359.6 707.8ZM357.7 715.7L356.2 717.6L356.2 711.3L357.7 709.4ZM356.2 717.6L355.0 719.9L355.0 713.6L356.2 711.3ZM355.0 719.9L354.3 722.4L354.3 716.1L355.0 713.6ZM354.3 722.4L354.1 725.3L354.1 719.0L354.3 716.1ZM354.1 719.0L354.4 726.6L354.4 732.9L354.1 725.3ZM354.4 732.9L310.5 753.2L310.5 746.9L354.4 726.6ZM310.5 753.2L308.6 752.9L308.6 746.6L310.5 746.9ZM308.6 752.9L282.5 718.8L282.5 712.5L308.6 746.6ZM282.5 718.8L280.0 718.9L280.0 712.6L282.5 712.5ZM280.0 718.9L277.4 718.9L277.4 712.6L280.0 712.6ZM277.4 718.9L274.7 718.7L274.7 712.4L277.4 712.6ZM274.7 718.7L272.0 718.3L272.0 712.0L274.7 712.4ZM272.0 718.3L269.3 717.8L269.3 711.5L272.0 712.0ZM269.3 717.8L266.8 717.1L266.8 710.8L269.3 711.5ZM266.8 717.1L264.6 716.1L264.6 709.8L266.8 710.8ZM264.6 716.1L262.6 714.8L262.6 708.5L264.6 709.8ZM262.6 714.8L260.9 713.1L260.9 706.8L262.6 708.5ZM260.9 713.1L259.8 711.2L259.8 704.9L260.9 706.8ZM259.8 711.2L259.0 709.2L259.0 702.9L259.8 704.9ZM259.0 709.2L258.7 707.0L258.7 700.7L259.0 702.9ZM258.7 700.7L258.8 698.5L258.8 704.8L258.7 707.0ZM258.8 698.5L259.3 696.3L259.3 702.6L258.8 704.8ZM259.3 696.3L260.1 694.1L260.1 700.4L259.3 702.6ZM260.1 694.1L261.3 692.0L261.3 698.3L260.1 700.4ZM261.3 692.0L264.5 687.4L264.5 693.7L261.3 698.3ZM264.5 693.7L241.2 660.5L241.2 654.2L264.5 687.4Z" fill="url(#pw)"/><path d="M241.2 654.2L242.3 652.4L458.8 554.7L460.9 554.4L553.0 632.4L554.6 634.2L553.7 636.1L509.7 656.3L510.0 659.5L509.6 662.7L508.7 665.9L507.3 668.9L505.5 671.5L503.2 673.7L500.6 675.1L497.8 675.7L495.6 675.6L493.7 675.2L491.9 674.6L490.2 673.8L488.5 673.0L486.8 672.1L485.0 671.1L483.0 670.2L450.0 685.4L387.9 710.8L385.6 709.4L383.2 708.1L380.6 707.1L378.0 706.2L375.2 705.6L372.5 705.2L369.6 705.0L366.8 705.1L364.2 705.7L361.8 706.6L359.6 707.8L357.7 709.4L356.2 711.3L355.0 713.6L354.3 716.1L354.1 719.0L354.4 726.6L310.5 746.9L308.6 746.6L282.5 712.5L280.0 712.6L277.4 712.6L274.7 712.4L272.0 712.0L269.3 711.5L266.8 710.8L264.6 709.8L262.6 708.5L260.9 706.8L259.8 704.9L259.0 702.9L258.7 700.7L258.8 698.5L259.3 696.3L260.1 694.1L261.3 692.0L264.5 687.4Z" fill="url(#pb)"/><clipPath id="pcbc"><path d="M241.2 654.2L242.3 652.4L458.8 554.7L460.9 554.4L553.0 632.4L554.6 634.2L553.7 636.1L509.7 656.3L510.0 659.5L509.6 662.7L508.7 665.9L507.3 668.9L505.5 671.5L503.2 673.7L500.6 675.1L497.8 675.7L495.6 675.6L493.7 675.2L491.9 674.6L490.2 673.8L488.5 673.0L486.8 672.1L485.0 671.1L483.0 670.2L450.0 685.4L387.9 710.8L385.6 709.4L383.2 708.1L380.6 707.1L378.0 706.2L375.2 705.6L372.5 705.2L369.6 705.0L366.8 705.1L364.2 705.7L361.8 706.6L359.6 707.8L357.7 709.4L356.2 711.3L355.0 713.6L354.3 716.1L354.1 719.0L354.4 726.6L310.5 746.9L308.6 746.6L282.5 712.5L280.0 712.6L277.4 712.6L274.7 712.4L272.0 712.0L269.3 711.5L266.8 710.8L264.6 709.8L262.6 708.5L260.9 706.8L259.8 704.9L259.0 702.9L258.7 700.7L258.8 698.5L259.3 696.3L260.1 694.1L261.3 692.0L264.5 687.4Z"/></clipPath><g clip-path="url(#pcbc)"><path d="M241.4 654.2L309.8 747.2L354.4 727.3L354.4 704.2L306.8 664.3L260.7 642.8Z" fill="#185aa2" opacity=".5"/><path d="M432.7 566.1L463.4 553.8L554.6 634.2L507.9 656.6L469.5 649.0L445.0 612.1Z" fill="#2058a6" opacity=".5"/><path d="M331.3 670.5L359.0 679.7L389.7 692.0L414.2 685.8" fill="none" stroke="#2a6fc0" stroke-width="0.9" opacity=".55" stroke-linejoin="round"/><path d="M328.3 676.6L355.9 687.4L383.5 698.1" fill="none" stroke="#2a6fc0" stroke-width="0.9" opacity=".55" stroke-linejoin="round"/><path d="M322.1 685.8L352.8 699.6L377.4 704.2" fill="none" stroke="#2a6fc0" stroke-width="0.9" opacity=".55" stroke-linejoin="round"/><path d="M359.0 664.3L374.3 655.1L383.5 642.8" fill="none" stroke="#2a6fc0" stroke-width="0.9" opacity=".55" stroke-linejoin="round"/><path d="M420.4 621.3L426.5 636.7L445.0 649.0L457.2 642.8" fill="none" stroke="#2a6fc0" stroke-width="0.9" opacity=".55" stroke-linejoin="round"/><path d="M426.5 618.3L441.9 612.1L445.0 621.3" fill="none" stroke="#2a6fc0" stroke-width="0.9" opacity=".55" stroke-linejoin="round"/><path d="M383.5 664.3L402.0 673.5L426.5 664.3L445.0 655.1" fill="none" stroke="#2a6fc0" stroke-width="0.9" opacity=".55" stroke-linejoin="round"/><path d="M334.4 692.0L359.0 704.2L383.5 704.2" fill="none" stroke="#2a6fc0" stroke-width="0.9" opacity=".55" stroke-linejoin="round"/><path d="M325.2 673.5L352.8 683.4L385.1 695.6" fill="none" stroke="#0f2f78" stroke-width="0.8" opacity=".7"/><path d="M331.3 687.4L357.4 701.2L382.0 703.6" fill="none" stroke="#0f2f78" stroke-width="0.8" opacity=".7"/><path d="M423.5 622.9L430.2 638.2L446.5 651.4" fill="none" stroke="#0f2f78" stroke-width="0.8" opacity=".7"/><path d="M377.7 680.9L460.0 644.0L479.5 667.9L396.4 705.4Z" fill="#153f8c" stroke="#e8f0ff" stroke-width="0.9" stroke-linejoin="miter"/><path d="M446.2 653.7L457.1 649.1L462.6 655.6L451.6 660.6Z" fill="#b8b0b4" /><ellipse cx="454.3" cy="654.9" rx="3.75" ry="2.60" fill="#e4e0e2" /><ellipse cx="390.6" cy="683.0" rx="6.21" ry="4.48" fill="url(#pad)" transform="rotate(-8 390.6 683.0)" /><ellipse cx="390.2" cy="682.7" rx="2.17" ry="1.44" fill="#f8f8f8" transform="rotate(-8 390.2 682.7)" opacity=".7"/><ellipse cx="406.5" cy="676.2" rx="6.21" ry="4.48" fill="url(#pad)" transform="rotate(-8 406.5 676.2)" /><ellipse cx="406.1" cy="676.0" rx="2.17" ry="1.44" fill="#f8f8f8" transform="rotate(-8 406.1 676.0)" opacity=".7"/><ellipse cx="422.7" cy="669.0" rx="6.21" ry="4.48" fill="url(#pad)" transform="rotate(-8 422.7 669.0)" /><ellipse cx="422.3" cy="668.7" rx="2.17" ry="1.44" fill="#f8f8f8" transform="rotate(-8 422.3 668.7)" opacity=".7"/><ellipse cx="438.6" cy="662.1" rx="6.21" ry="4.48" fill="url(#pad)" transform="rotate(-8 438.6 662.1)" /><ellipse cx="438.2" cy="661.8" rx="2.17" ry="1.44" fill="#f8f8f8" transform="rotate(-8 438.2 661.8)" opacity=".7"/><ellipse cx="400.0" cy="695.3" rx="6.21" ry="4.48" fill="url(#pad)" transform="rotate(-8 400.0 695.3)" /><ellipse cx="399.6" cy="695.0" rx="2.17" ry="1.44" fill="#f8f8f8" transform="rotate(-8 399.6 695.0)" opacity=".7"/><ellipse cx="416.2" cy="688.1" rx="6.21" ry="4.48" fill="url(#pad)" transform="rotate(-8 416.2 688.1)" /><ellipse cx="415.8" cy="687.8" rx="2.17" ry="1.44" fill="#f8f8f8" transform="rotate(-8 415.8 687.8)" opacity=".7"/><ellipse cx="431.8" cy="680.9" rx="6.21" ry="4.48" fill="url(#pad)" transform="rotate(-8 431.8 680.9)" /><ellipse cx="431.4" cy="680.6" rx="2.17" ry="1.44" fill="#f8f8f8" transform="rotate(-8 431.4 680.6)" opacity=".7"/><ellipse cx="447.7" cy="673.9" rx="6.21" ry="4.48" fill="url(#pad)" transform="rotate(-8 447.7 673.9)" /><ellipse cx="447.3" cy="673.6" rx="2.17" ry="1.44" fill="#f8f8f8" transform="rotate(-8 447.3 673.6)" opacity=".7"/><ellipse cx="463.6" cy="667.1" rx="6.21" ry="4.48" fill="url(#pad)" transform="rotate(-8 463.6 667.1)" /><ellipse cx="463.1" cy="666.9" rx="2.17" ry="1.44" fill="#f8f8f8" transform="rotate(-8 463.1 666.9)" opacity=".7"/><path d="M426.8 620.2L442.6 612.3L463.6 638.7L447.3 647.4Z" fill="#1b4b9a" stroke="#dfeaff" stroke-width="0.8"/><g transform="rotate(-24 436.6 618.1)"><rect x="430.94" y="615.88" width="11.26" height="4.33" rx="0.72" fill="#d8d8dc"/><rect x="432.82" y="615.74" width="7.51" height="4.62" fill="#4a4844"/></g><g transform="rotate(-24 442.3 624.8)"><rect x="436.71" y="622.67" width="11.26" height="4.33" rx="0.72" fill="#d8d8dc"/><rect x="438.59" y="622.53" width="7.51" height="4.62" fill="#55524c"/></g><g transform="rotate(-24 448.1 631.5)"><rect x="442.49" y="629.31" width="11.26" height="4.33" rx="0.72" fill="#d8d8dc"/><rect x="444.37" y="629.17" width="7.51" height="4.62" fill="#c08e62"/></g><g transform="rotate(-24 453.5 638.7)"><rect x="447.83" y="636.53" width="11.26" height="4.33" rx="0.72" fill="#d8d8dc"/><rect x="449.71" y="636.39" width="7.51" height="4.62" fill="#b8885e"/></g><path d="M434.3 618.5L438.6 617.0" fill="none" stroke="#e8e8e8" stroke-width="0.5" /><path d="M440.0 625.4L444.4 623.8" fill="none" stroke="#e8e8e8" stroke-width="0.5" /><path d="M342.3 656.0L358.2 649.1L380.5 675.1L364.4 684.5Z" fill="#1b4b9a" stroke="#dfeaff" stroke-width="0.8"/><g transform="rotate(-24 351.9 654.4)"><rect x="346.32" y="652.27" width="11.26" height="4.33" rx="0.72" fill="#d8d8dc"/><rect x="348.19" y="652.13" width="7.51" height="4.62" fill="#8c8684"/></g><g transform="rotate(-24 358.2 661.1)"><rect x="352.53" y="658.92" width="11.26" height="4.33" rx="0.72" fill="#d8d8dc"/><rect x="354.40" y="658.77" width="7.51" height="4.62" fill="#c08e62"/></g><g transform="rotate(-24 363.9 668.2)"><rect x="358.30" y="665.99" width="11.26" height="4.33" rx="0.72" fill="#d8d8dc"/><rect x="360.18" y="665.85" width="7.51" height="4.62" fill="#77716f"/></g><g transform="rotate(-24 369.3 675.4)"><rect x="363.65" y="673.21" width="11.26" height="4.33" rx="0.72" fill="#d8d8dc"/><rect x="365.52" y="673.07" width="7.51" height="4.62" fill="#3a3a3c"/></g><ellipse cx="369.3" cy="675.4" rx="1.30" ry="1.01" fill="none" stroke="#e0e0e0" stroke-width="0.35"/><path d="M358.9 678.0L379.8 669.0" fill="none" stroke="#dfeaff" stroke-width="0.5" /><text transform="matrix(-1.243 0.380 -0.500 -0.866 462.0 597.1)" y="2.16" font-family="Liberation Sans, sans-serif" font-size="6.0" font-weight="bold" fill="#f0f5ff" text-anchor="middle" opacity=".9">SCL</text><text transform="matrix(-1.243 0.380 -0.500 -0.866 469.6 606.6)" y="2.16" font-family="Liberation Sans, sans-serif" font-size="6.0" font-weight="bold" fill="#f0f5ff" text-anchor="middle" opacity=".9">SDA</text><text transform="matrix(-1.243 0.380 -0.500 -0.866 477.1 616.6)" y="2.16" font-family="Liberation Sans, sans-serif" font-size="6.0" font-weight="bold" fill="#f0f5ff" text-anchor="middle" opacity=".9">VCC</text><text transform="matrix(-1.243 0.380 -0.500 -0.866 484.1 626.2)" y="2.16" font-family="Liberation Sans, sans-serif" font-size="6.0" font-weight="bold" fill="#f0f5ff" text-anchor="middle" opacity=".9">GND</text><text transform="matrix(-1.088 0.507 -0.530 -0.848 475.6 647.7)" y="1.98" font-family="Liberation Sans, sans-serif" font-size="5.5" font-weight="bold" fill="#f0f5ff" text-anchor="middle" opacity=".9">GND</text><text transform="matrix(-1.088 0.507 -0.530 -0.848 490.1 640.7)" y="1.98" font-family="Liberation Sans, sans-serif" font-size="5.5" font-weight="bold" fill="#f0f5ff" text-anchor="middle" opacity=".9">VCC</text><text transform="matrix(-1.088 0.507 -0.530 -0.848 504.6 634.2)" y="1.98" font-family="Liberation Sans, sans-serif" font-size="5.5" font-weight="bold" fill="#f0f5ff" text-anchor="middle" opacity=".9">SDA</text><text transform="matrix(-1.088 0.507 -0.530 -0.848 519.2 627.2)" y="1.98" font-family="Liberation Sans, sans-serif" font-size="5.5" font-weight="bold" fill="#f0f5ff" text-anchor="middle" opacity=".9">SCL</text><text transform="matrix(-1.088 0.507 -0.530 -0.848 535.2 620.1)" y="1.98" font-family="Liberation Sans, sans-serif" font-size="5.5" font-weight="bold" fill="#f0f5ff" text-anchor="middle" opacity=".9">ADDR</text><text transform="matrix(-1.088 0.507 -0.530 -0.848 502.1 649.2)" y="1.98" font-family="Liberation Sans, sans-serif" font-size="5.5" font-weight="bold" fill="#f0f5ff" text-anchor="middle" opacity=".9">A1</text><text transform="matrix(-1.088 0.507 -0.530 -0.848 513.2 644.7)" y="1.98" font-family="Liberation Sans, sans-serif" font-size="5.5" font-weight="bold" fill="#f0f5ff" text-anchor="middle" opacity=".9">A2</text><text transform="matrix(-1.088 0.507 -0.530 -0.848 525.7 639.7)" y="1.98" font-family="Liberation Sans, sans-serif" font-size="5.5" font-weight="bold" fill="#f0f5ff" text-anchor="middle" opacity=".9">A3</text><text transform="matrix(-1.088 0.507 -0.530 -0.848 543.3 631.2)" y="1.98" font-family="Liberation Sans, sans-serif" font-size="5.5" font-weight="bold" fill="#f0f5ff" text-anchor="middle" opacity=".9">ALRT</text><text transform="matrix(-1.088 0.507 -0.530 -0.848 486.7 657.1)" y="1.98" font-family="Liberation Sans, sans-serif" font-size="5.5" font-weight="bold" fill="#f0f5ff" text-anchor="middle" opacity=".9">A0</text><text transform="matrix(-1.088 0.507 -0.530 -0.848 449.3 583.5)" y="1.66" font-family="Liberation Sans, sans-serif" font-size="4.6" font-weight="bold" fill="#f0f5ff" text-anchor="middle" opacity=".9">A1 A2</text><text transform="matrix(0.632 0.839 0.906 -0.423 332.7 687.9)" y="2.34" font-family="Liberation Sans, sans-serif" font-size="6.5" font-weight="bold" fill="#f0f5ff" text-anchor="middle" opacity=".9">A0</text><path d="M260.8 672.8L296.2 722.4L328.0 707.2" fill="none" stroke="#e8f0ff" stroke-width="0.5" /><path d="M498.6 627.9L531.0 615.9" fill="none" stroke="#e8f0ff" stroke-width="0.6" /></g><ellipse cx="272.5" cy="699.6" rx="8.13" ry="6.60" fill="#514a4c" /><ellipse cx="272.3" cy="702.8" rx="6.75" ry="3.68" fill="#f4f4f4" /><ellipse cx="496.7" cy="662.9" rx="8.44" ry="6.75" fill="#4c4c4a" /><ellipse cx="496.2" cy="666.3" rx="6.44" ry="3.38" fill="#f0f0f0" /><path d="M383.6 647.0L392.4 643.4" fill="none" stroke="#e4e2e0" stroke-width="1.9" stroke-linecap="round"/><path d="M383.3 647.7L388.3 645.6" fill="none" stroke="#9a9aa0" stroke-width="0.5" /><path d="M385.7 649.4L394.4 645.8" fill="none" stroke="#e4e2e0" stroke-width="1.9" stroke-linecap="round"/><path d="M385.4 650.1L390.3 648.0" fill="none" stroke="#9a9aa0" stroke-width="0.5" /><path d="M387.9 651.8L396.5 648.2" fill="none" stroke="#e4e2e0" stroke-width="1.9" stroke-linecap="round"/><path d="M387.6 652.5L392.4 650.4" fill="none" stroke="#9a9aa0" stroke-width="0.5" /><path d="M390.0 654.2L398.5 650.6" fill="none" stroke="#e4e2e0" stroke-width="1.9" stroke-linecap="round"/><path d="M389.7 654.9L394.4 652.8" fill="none" stroke="#9a9aa0" stroke-width="0.5" /><path d="M392.2 656.6L400.5 653.0" fill="none" stroke="#e4e2e0" stroke-width="1.9" stroke-linecap="round"/><path d="M391.9 657.3L396.4 655.2" fill="none" stroke="#9a9aa0" stroke-width="0.5" /><path d="M412.0 635.8L416.8 635.7" fill="none" stroke="#d4ccc0" stroke-width="1.5" stroke-linecap="round"/><path d="M414.3 638.1L419.0 638.0" fill="none" stroke="#d4ccc0" stroke-width="1.5" stroke-linecap="round"/><path d="M416.6 640.4L421.3 640.3" fill="none" stroke="#d4ccc0" stroke-width="1.5" stroke-linecap="round"/><path d="M418.8 642.7L423.6 642.5" fill="none" stroke="#d4ccc0" stroke-width="1.5" stroke-linecap="round"/><path d="M421.1 644.9L425.8 644.8" fill="none" stroke="#d4ccc0" stroke-width="1.5" stroke-linecap="round"/><path d="M401.9 652.3L420.5 644.6L421.3 647.3L402.9 655.4Z" fill="#1a1a1c" /><path d="M400.6 656.8L420.9 649.9" fill="none" stroke="#a8c0e8" stroke-width="0.7" /><path d="M391.4 640.6L408.7 632.9L420.7 644.7L402.1 652.4Z" fill="#2c2c30" /><path d="M391.4 640.6L408.7 632.9L410.4 634.6L393.1 642.3Z" fill="#38383c" opacity=".6"/><path d="M281.9 602.9L414.9 546.1L431.8 564.5L437.6 590.3L437.9 609.4L321.0 662.7L304.2 662.7L302.6 645.9L281.9 625.9Z" fill="#5ab872" /><path d="M281.9 602.9L287.3 605.2L287.9 625.9L281.9 625.2Z" fill="#4faf6a" /><path d="M287.9 622.9L298.0 619.5L304.9 645.9L304.9 662.7L287.9 662.7Z" fill="#3f9e5c" /><path d="M304.2 645.9L437.6 590.3L437.9 609.4L321.0 662.7L304.2 662.7Z" fill="#5ab872" /><path d="M298.0 619.0L431.5 564.5L437.6 590.3L304.2 645.9Z" fill="url(#gf)" /><path d="M281.9 602.9L414.9 546.1L416.9 547.7L431.8 564.5L298.0 619.5L286.5 605.2Z" fill="url(#gt)" /><path d="M286.7 605.1L298.0 619.5L304.2 645.9L302.3 646.6L287.9 625.9Z" fill="#74cc88" /><path d="M286.8 605.2L287.6 625.2" fill="none" stroke="#3f9a5a" stroke-width="0.5" /><path d="M298.0 619.2L431.5 564.5" fill="none" stroke="#8cdc9c" stroke-width="0.6" opacity=".8"/><path d="M304.2 645.9L437.6 590.3" fill="none" stroke="#4eaa66" stroke-width="0.5" opacity=".8"/><path d="M350.2 575.6L364.8 591.4L371.4 617.5L371.7 638.2" fill="none" stroke="#4ea868" stroke-width="0.4" /><ellipse cx="302.6" cy="607.5" rx="10.13" ry="7.21" fill="#358c54" transform="rotate(-6 302.6 607.5)" /><ellipse cx="302.8" cy="608.9" rx="8.75" ry="5.22" fill="url(#scr)" transform="rotate(-6 302.8 608.9)" /><path d="M296.2 611.5L309.4 607.8" fill="none" stroke="#f6f6fa" stroke-width="1.1" opacity=".95"/><path d="M296.5 613.0L309.7 609.7" fill="none" stroke="#8a90a0" stroke-width="0.6" opacity=".8"/><ellipse cx="324.9" cy="597.8" rx="10.13" ry="7.21" fill="#358c54" transform="rotate(-6 324.9 597.8)" /><ellipse cx="325.0" cy="599.2" rx="8.75" ry="5.22" fill="url(#scr)" transform="rotate(-6 325.0 599.2)" /><path d="M323.5 595.1L326.2 594.8L326.2 604.0L323.5 604.3Z" fill="#5a8870" opacity=".85"/><path d="M323.0 595.4L323.0 604.0" fill="none" stroke="#f0f0f4" stroke-width="0.5" opacity=".8"/><path d="M320.3 596.0L329.5 595.1" fill="none" stroke="#e8f0f0" stroke-width="0.6" opacity=".7"/><ellipse cx="346.8" cy="589.1" rx="10.13" ry="7.21" fill="#358c54" transform="rotate(-6 346.8 589.1)" /><ellipse cx="347.0" cy="590.5" rx="8.75" ry="5.22" fill="url(#scr)" transform="rotate(-6 347.0 590.5)" /><path d="M345.4 586.3L348.2 586.0L348.2 595.2L345.4 595.5Z" fill="#5a8870" opacity=".85"/><path d="M345.0 586.6L345.0 595.2" fill="none" stroke="#f0f0f4" stroke-width="0.5" opacity=".8"/><path d="M342.2 587.3L351.4 586.3" fill="none" stroke="#e8f0f0" stroke-width="0.6" opacity=".7"/><ellipse cx="368.9" cy="579.3" rx="10.13" ry="7.21" fill="#358c54" transform="rotate(-6 368.9 579.3)" /><ellipse cx="369.1" cy="580.7" rx="8.75" ry="5.22" fill="url(#scr)" transform="rotate(-6 369.1 580.7)" /><path d="M362.5 583.3L375.6 579.6" fill="none" stroke="#f6f6fa" stroke-width="1.1" opacity=".95"/><path d="M362.8 584.8L376.0 581.4" fill="none" stroke="#8a90a0" stroke-width="0.6" opacity=".8"/><ellipse cx="391.1" cy="568.7" rx="10.13" ry="7.21" fill="#358c54" transform="rotate(-6 391.1 568.7)" /><ellipse cx="391.6" cy="567.8" rx="8.59" ry="5.52" fill="#2f8a50" transform="rotate(-6 391.6 567.8)" /><ellipse cx="390.5" cy="570.5" rx="6.14" ry="3.38" fill="#58b070" transform="rotate(-6 390.5 570.5)" opacity=".8"/><ellipse cx="413.1" cy="559.5" rx="10.13" ry="7.21" fill="#358c54" transform="rotate(-6 413.1 559.5)" /><ellipse cx="413.5" cy="558.6" rx="8.59" ry="5.52" fill="#2f8a50" transform="rotate(-6 413.5 558.6)" /><ellipse cx="412.5" cy="561.3" rx="6.14" ry="3.38" fill="#58b070" transform="rotate(-6 412.5 561.3)" opacity=".8"/><path d="M313.1 650.3L318.3 649.4L318.3 652.8L313.1 653.7Z" fill="#2b7a44" /><path d="M334.5 640.6L339.7 639.7L339.7 643.1L334.5 644.0Z" fill="#2b7a44" /><path d="M356.5 631.4L361.7 630.5L361.7 633.9L356.5 634.8Z" fill="#2b7a44" /><path d="M378.7 621.8L383.9 620.9L383.9 624.2L378.7 625.2Z" fill="#2b7a44" /><path d="M401.0 612.1L406.2 611.2L406.2 614.6L401.0 615.5Z" fill="#2b7a44" /><path d="M422.8 602.1L428.0 601.2L428.0 604.6L422.8 605.5Z" fill="#2b7a44" /><ellipse cx="326.4" cy="648.2" rx="2.76" ry="3.38" fill="#a4e0b0" opacity=".85"/><ellipse cx="392.8" cy="621.0" rx="2.76" ry="3.38" fill="#a4e0b0" opacity=".85"/><path d="M461.3 547.4L490.2 533.9L497.4 535.9L498.9 546.2L520.5 573.2L529.2 575.8L530.2 614.3L531.0 616.8L501.7 628.2L492.5 618.9L492.2 612.5L480.1 600.1L466.3 587.8L461.3 576.3Z" fill="url(#wc1)" /><path d="M461.3 547.4L490.2 533.9L497.4 535.9L467.8 550.1Z" fill="#fdfdff" /><ellipse cx="489.4" cy="573.2" rx="20.04" ry="14.64" fill="url(#cav)" transform="rotate(38 489.4 573.2)" /><path d="M492.5 585.5L520.5 573.2L529.2 575.8L530.2 614.3L501.7 627.9L492.5 618.6Z" fill="url(#wc2)" /><path d="M492.5 586.3L492.8 618.6" fill="none" stroke="#e2e5f2" stroke-width="0.5" /><path d="M485.2 563.9L488.0 563.3L488.0 573.9L485.2 574.6Z" fill="#c9c6d2" /><path d="M492.2 571.6L494.9 571.0L494.9 583.2L492.2 583.8Z" fill="#c9c6d2" /><path d="M500.3 580.1L503.1 579.5L503.1 586.3L500.3 586.9Z" fill="#c9c6d2" /><path d="M260.2 634.2L291.2 620.8L298.2 626.4L298.8 648.8L310.7 665.1L313.2 662.7L323.7 664.3L328.1 668.4L328.1 704.2L296.1 721.3L288.7 714.0L275.7 696.1L261.9 674.9Z" fill="url(#wc1)" /><path d="M260.2 634.2L291.2 620.8L298.2 626.4L267.6 639.9Z" fill="#fdfdff" /><ellipse cx="287.4" cy="663.8" rx="20.35" ry="14.33" fill="url(#cav)" transform="rotate(52 287.4 663.8)" /><path d="M296.9 681.4L310.7 665.1L313.2 662.7L323.7 664.3L328.1 668.4L328.1 704.2L296.1 721.3Z" fill="url(#wc2)" /><path d="M297.2 680.6L296.2 720.5" fill="none" stroke="#e2e5f2" stroke-width="0.5" /><path d="M281.2 652.4L283.5 652.1L283.5 664.3L281.2 664.6Z" fill="#bcb8c4" /><path d="M287.3 661.2L289.5 660.9L289.5 672.8L287.3 673.1Z" fill="#c4b8bc" /><path d="M294.4 671.0L296.7 670.7L296.7 678.5L294.4 678.8Z" fill="#c0b4b8" /></svg>
<div class="b" style="left:0;top:0;width:1108px;height:798px;border:1px solid #a2a2a2;border-radius:8px;pointer-events:none;border-top-color:#b4b4b4;border-left-color:#b0b0b0;"></div>
</div>
</body></html>
